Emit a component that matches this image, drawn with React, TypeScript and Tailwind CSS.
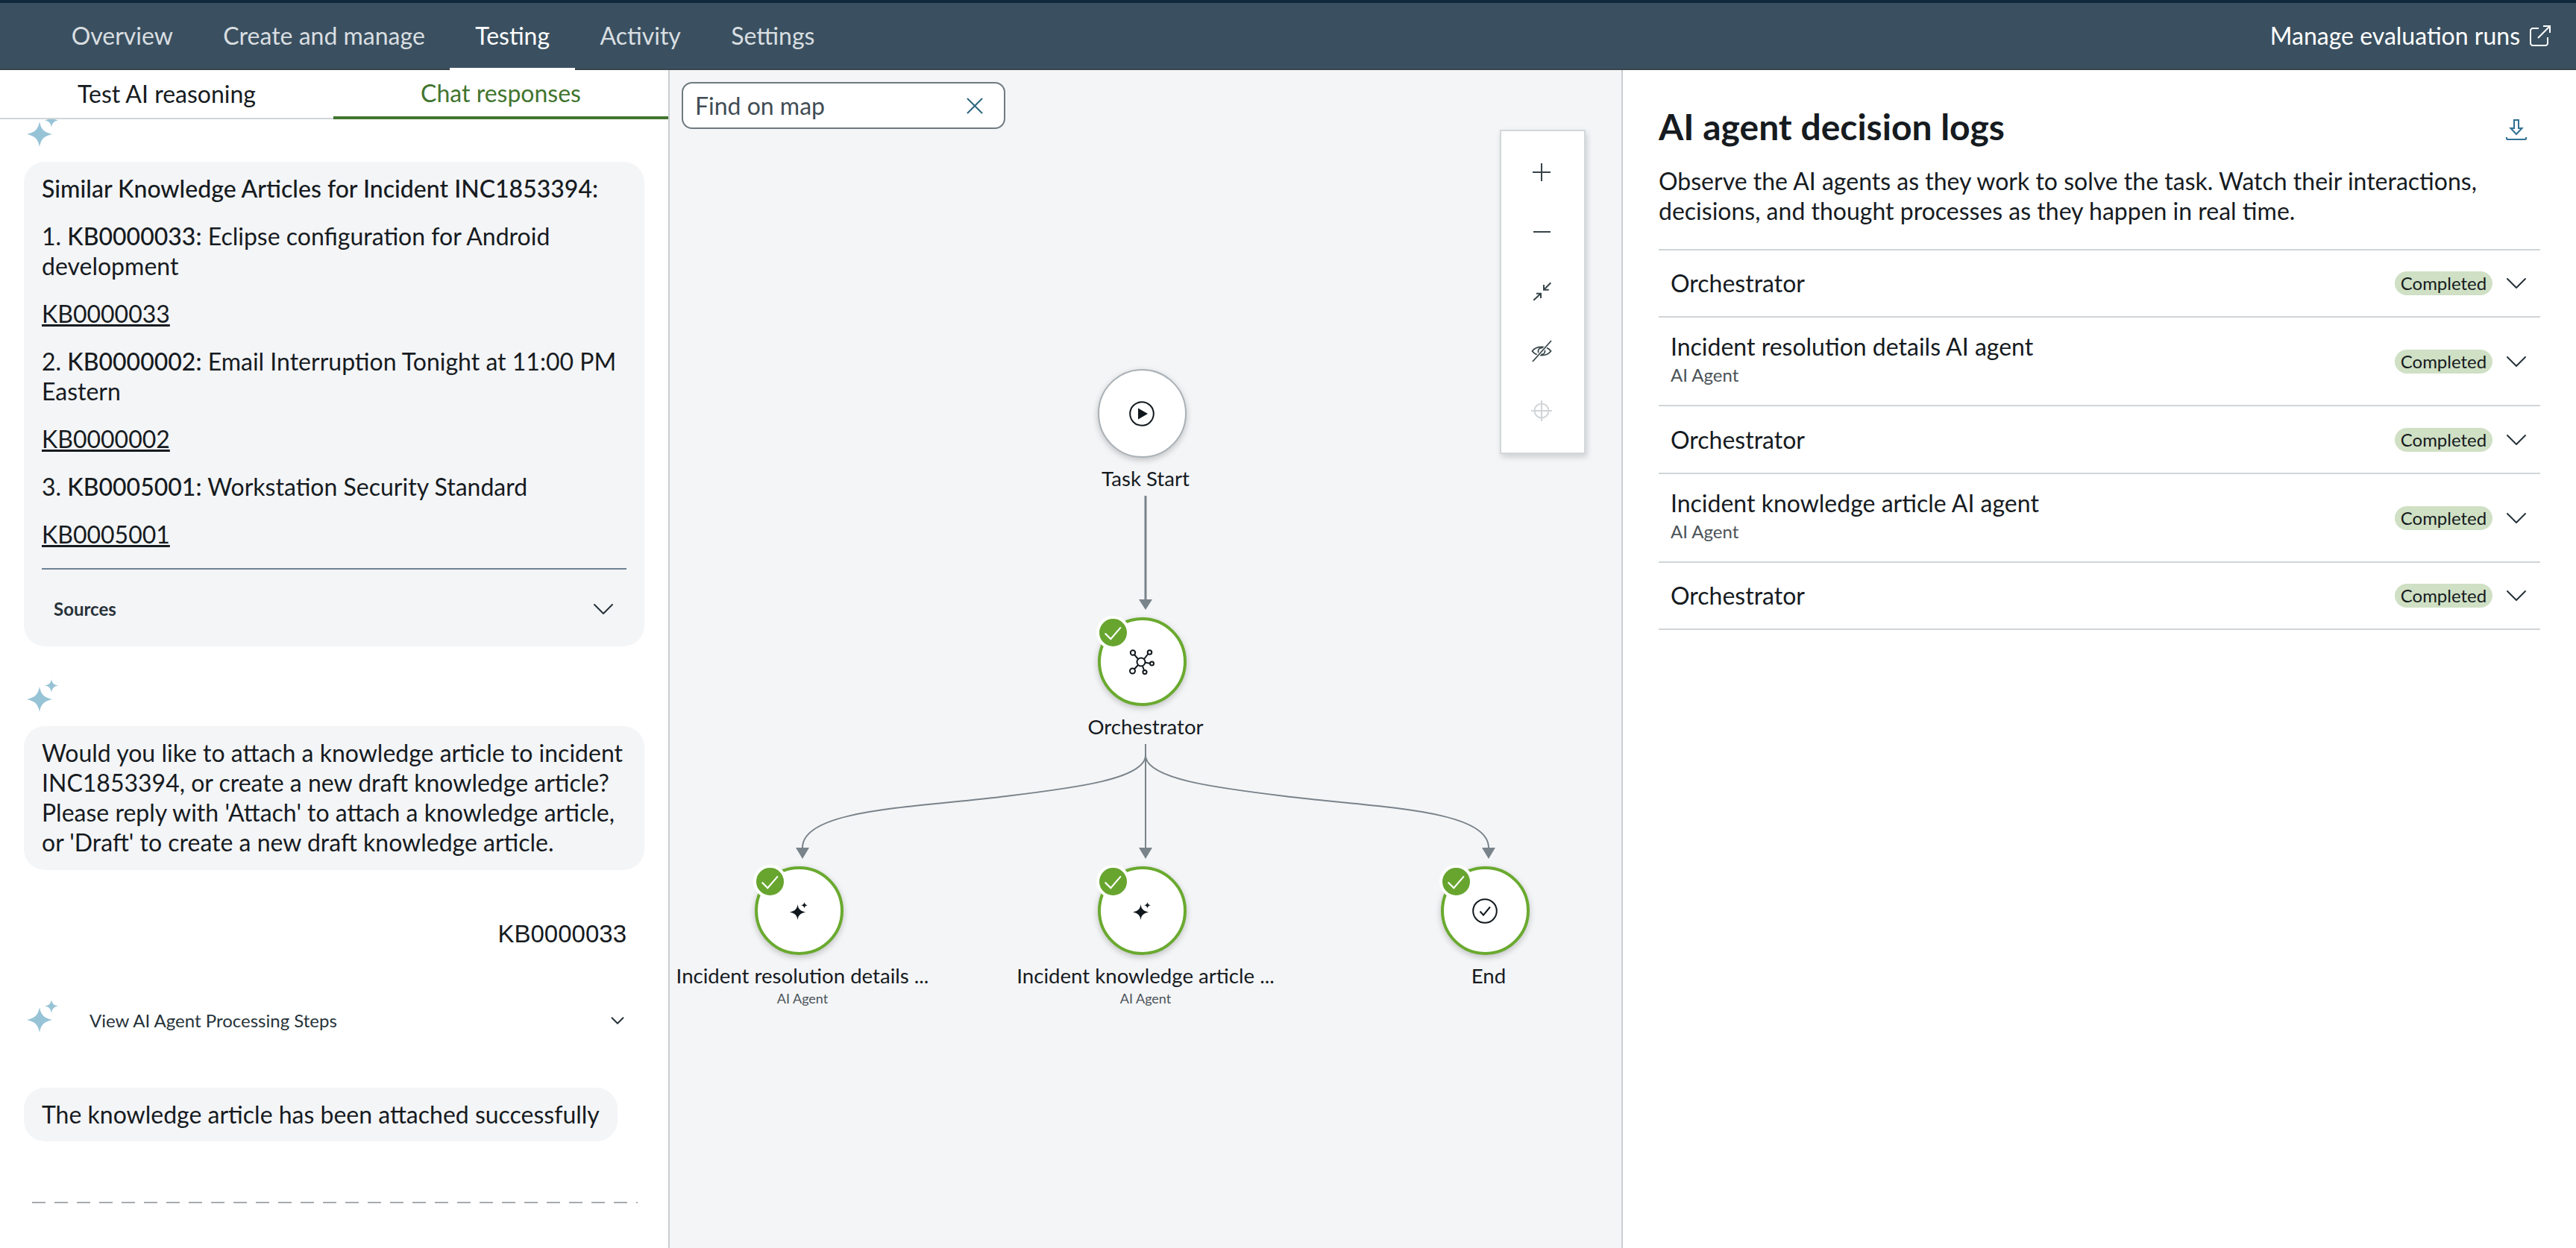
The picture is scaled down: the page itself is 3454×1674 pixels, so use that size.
import { ChevronDown, X } from "lucide-react";

const navItems = ["Overview", "Create and manage", "Testing", "Activity", "Settings"];

const logRows = [
  { title: "Orchestrator", h: "h-[90px]" },
  { title: "Incident resolution details AI agent", sub: "AI Agent", h: "h-[119px]" },
  { title: "Orchestrator", h: "h-[91px]" },
  { title: "Incident knowledge article AI agent", sub: "AI Agent", h: "h-[119px]" },
  { title: "Orchestrator", h: "h-[90px]" },
];

const Sparkle = ({ className = "" }: { className?: string }) => (
  <svg viewBox="0 0 42 44" className={`block h-[44px] w-[42px] shrink-0 ${className}`} fill="#97c3d6">
    <path d="M17 10C19 21 23.5 24.5 34 27C23.5 29.5 19 33 17 44C15 33 10.5 29.5 0 27C10.5 24.5 15 21 17 10Z" />
    <path d="M33 0C33.8 5 36 7.4 42 8.5C36 9.6 33.8 12 33 18C32.2 12 30 9.6 24 8.5C30 7.4 32.2 5 33 0Z" />
  </svg>
);

const DarkSparkle = () => (
  <svg viewBox="0 0 24 24" className="h-[24px] w-[24px]" fill="#11181d">
    <path d="M10.5 3C11.3 9 13.5 11.8 21 13.5C13.5 15.2 11.3 18 10.5 24C9.7 18 7.5 15.2 0 13.5C7.5 11.8 9.7 9 10.5 3Z" />
    <path d="M19.5 0C19.8 2.4 20.8 3.6 24 4.2C20.8 4.8 19.8 6 19.5 8.6C19.2 6 18.2 4.8 15 4.2C18.2 3.6 19.2 2.4 19.5 0Z" />
  </svg>
);

const PlayIcon = () => (
  <svg viewBox="0 0 34 34" className="h-[34px] w-[34px]">
    <circle cx="17" cy="17" r="15.8" fill="none" stroke="#11181d" strokeWidth="2" />
    <path d="M12 9.5L25 17L12 24.5Z" fill="#11181d" />
  </svg>
);

const NetworkIcon = () => (
  <svg viewBox="0 0 34 34" className="h-[34px] w-[34px]" fill="none" stroke="#11181d" strokeWidth="2">
    <circle cx="16" cy="17" r="5.5" />
    <circle cx="5" cy="4.5" r="3.2" />
    <circle cx="27.5" cy="4" r="2.8" />
    <circle cx="30.5" cy="19" r="2.5" />
    <circle cx="4.5" cy="29" r="3.5" />
    <circle cx="21" cy="30.5" r="2.6" />
    <path d="M7 7L12 13M25.5 6L20 13M21.5 17.8L28 18.8M12 21L7 26.5M18 22.5L20 28" />
  </svg>
);

const CheckCircleIcon = () => (
  <svg viewBox="0 0 34 34" className="h-[34px] w-[34px]" fill="none" stroke="#11181d" strokeWidth="2">
    <circle cx="17" cy="17" r="15.8" />
    <path d="M10.5 17.5L15 22.5L24 11.5" />
  </svg>
);

const nodes = [
  { label: "Task Start", icon: <PlayIcon />, done: false, wrap: "left-[458px] top-[401px]" },
  { label: "Orchestrator", icon: <NetworkIcon />, done: true, wrap: "left-[458px] top-[734px]" },
  { label: "Incident resolution details ...", sub: "AI Agent", icon: <DarkSparkle />, done: true, wrap: "left-[-2px] top-[1068px]" },
  { label: "Incident knowledge article ...", sub: "AI Agent", icon: <DarkSparkle />, done: true, wrap: "left-[458px] top-[1068px]" },
  { label: "End", icon: <CheckCircleIcon />, done: true, wrap: "left-[918px] top-[1068px]" },
];

const Node = ({ label, sub, icon, done, wrap }: { label: string; sub?: string; icon: React.ReactNode; done: boolean; wrap: string }) => (
  <div className={`absolute flex w-[360px] flex-col items-center ${wrap}`}>
    <div
      className={`relative mr-[10px] flex h-[119px] w-[119px] items-center justify-center rounded-full bg-white shadow-[0_3px_8px_rgba(0,0,0,0.22)] ${
        done ? "border-[4px] border-[#6aaa2f]" : "border-2 border-[#a9b1b6]"
      }`}
    >
      {icon}
      {done && (
        <div className="absolute left-[-6px] top-[-6px] flex h-[45px] w-[45px] items-center justify-center rounded-full border-[4px] border-white bg-[#67a52f]">
          <svg viewBox="0 0 24 24" className="h-[26px] w-[26px]" fill="none" stroke="#fff" strokeWidth="2">
            <path d="M2.5 12.5L9.5 19.5L22 5" />
          </svg>
        </div>
      )}
    </div>
    <div className="mt-[9px] whitespace-nowrap text-[27.6px] leading-[38px] text-[#161b1f]">{label}</div>
    {sub && <div className="text-[18px] leading-[22px] text-[#4b5359]">{sub}</div>}
  </div>
);

const Connectors = () => (
  <svg viewBox="0 0 1277 1580" className="absolute left-0 top-0 h-[1580px] w-[1277px]" fill="none" stroke="#79838a">
    <path d="M638 571V711" strokeWidth="3" />
    <path d="M629 710H647L638 724Z" fill="#79838a" stroke="none" />
    <path d="M638 904V1044" strokeWidth="2" />
    <path d="M629 1043H647L638 1058Z" fill="#79838a" stroke="none" />
    <path d="M638 919C638 951 542 963 451 974C332 989 178 991 178 1043" strokeWidth="2" />
    <path d="M169 1043H187L178 1058Z" fill="#79838a" stroke="none" />
    <path d="M638 919C638 951 734 963 825 974C944 989 1098 991 1098 1043" strokeWidth="2" />
    <path d="M1089 1043H1107L1098 1058Z" fill="#79838a" stroke="none" />
  </svg>
);

const MapControls = () => (
  <div className="absolute left-[1113px] top-[80px] flex h-[435px] w-[115px] flex-col items-center border-2 border-[#d2d8da] bg-white pr-[3px] pt-[15px] shadow-[2px_4px_8px_rgba(0,0,0,0.16)]">
    {[
      <path key="a" d="M13 1V25M1 13H25" />,
      <path key="b" d="M2 13H25" />,
      <path key="c" d="M25.3 1.3L16 10.7M16 4V10.7H22.7M2.3 24.7L12 15.7M6 15.7H12V22" />,
      <g key="d" strokeWidth="1.8">
        <path d="M0.5 13C6 5.5 20 5.5 25.5 13C20 20.5 6 20.5 0.5 13Z" />
        <circle cx="13" cy="13" r="4.5" />
        <path d="M1 27L26 -1" stroke="#fff" strokeWidth="4" />
        <path d="M1 27L26 -1" />
      </g>,
      <g key="e" stroke="#d2d5d7">
        <circle cx="13" cy="13" r="9.5" />
        <path d="M13 -1V27M-1 13H27" />
      </g>,
    ].map((icon, i) => (
      <div key={i} className="flex h-[80px] w-full items-center justify-center">
        <svg viewBox="0 0 26 26" className="h-[26px] w-[26px] overflow-visible" fill="none" stroke="#37454a" strokeWidth="2">
          {icon}
        </svg>
      </div>
    ))}
  </div>
);

const ChatPanel = () => (
  <div className="flex h-full w-[898px] shrink-0 flex-col border-r-2 border-[#c9ced1] bg-white text-[32px] leading-[40px] text-[#161b1f]">
    <div className="flex h-[66px] shrink-0">
      <div className="flex w-[447px] items-center justify-center border-b-2 border-[#d0d5d8]">Test AI reasoning</div>
      <div className="flex w-[449px] items-center justify-center border-b-4 border-[#42752f] text-[#42752f]">Chat responses</div>
    </div>
    <div className="min-h-0 flex-1 overflow-hidden">
      <div className="mt-[-7px] px-[32px]">
        <Sparkle className="ml-[4px]" />
        <div className="mt-[20px] rounded-[28px] bg-[#f4f5f7] px-[24px] pt-[16px]">
          <p className="mb-[24px] font-medium">Similar Knowledge Articles for Incident INC1853394:</p>
          <p className="mb-[24px]">1. <span className="font-medium">KB0000033:</span> Eclipse configuration for Android development</p>
          <p className="mb-[24px] underline">KB0000033</p>
          <p className="mb-[24px]">2. <span className="font-medium">KB0000002:</span> Email Interruption Tonight at 11:00 PM Eastern</p>
          <p className="mb-[24px] underline">KB0000002</p>
          <p className="mb-[24px]">3. <span className="font-medium">KB0005001:</span> Workstation Security Standard</p>
          <p className="mb-[25px] underline">KB0005001</p>
          <div className="flex h-[105px] items-center justify-between border-t-2 border-[#6d8295] pl-[16px] pr-[7px] pt-[3px]">
            <span className="text-[24px] font-bold leading-[30px] text-[#27333a]">Sources</span>
            <ChevronDown className="h-[48px] w-[48px] text-[#27333a]" strokeWidth={1} />
          </div>
        </div>
        <Sparkle className="ml-[4px] mt-[44px]" />
        <div className="mt-[19px] rounded-[28px] bg-[#f4f5f7] px-[24px] pb-[17px] pt-[16px]">
          Would you like to attach a knowledge article to incident INC1853394, or create a new draft knowledge article? Please reply with 'Attach' to attach a knowledge article, or 'Draft' to create a new draft knowledge article.
        </div>
        <div className="mt-[66px] pr-[24px] text-right text-[33px] [font-family:'Liberation_Sans',sans-serif]">KB0000033</div>
        <div className="mt-[68px] flex items-center">
          <Sparkle className="ml-[4px]" />
          <span className="ml-[42px] mt-[12px] flex-1 text-[24px] leading-[30px] text-[#27333a]">View AI Agent Processing Steps</span>
          <ChevronDown className="mr-[21px] mt-[12px] h-[30px] w-[30px] text-[#27333a]" strokeWidth={1.6} />
        </div>
        <div className="mt-[74px] w-fit rounded-[28px] bg-[#f4f5f7] px-[24px] py-[16px]">The knowledge article has been attached successfully</div>
        <div className="ml-[11px] mt-[81px] h-[2px] w-[812px] bg-[repeating-linear-gradient(to_right,#a7abae_0,#a7abae_18px,transparent_18px,transparent_30px)]" />
      </div>
    </div>
  </div>
);

const MapPanel = () => (
  <div className="relative h-full w-[1278px] shrink-0 overflow-hidden border-r-2 border-[#c9ced1] bg-[#f4f5f7] text-[#161b1f]">
    <div className="absolute left-[16px] top-[16px] flex h-[63px] w-[434px] items-center justify-between rounded-[14px] border-2 border-[#6f7a80] bg-white pl-[16px] pr-[20px] text-[32px] text-[#414d55]">
      <span>Find on map</span>
      <X className="h-[38px] w-[38px] text-[#2f6880]" strokeWidth={1.3} />
    </div>
    <Connectors />
    {nodes.map((n) => (
      <Node key={n.label} {...n} />
    ))}
    <MapControls />
  </div>
);

const LogsPanel = () => (
  <div className="h-full flex-1 bg-white pl-[48px] pr-[48px] text-[#161b1f]">
    <div className="flex items-center justify-between pt-[48px]">
      <h1 className="text-[48px] font-bold leading-[56px]">AI agent decision logs</h1>
      <svg viewBox="0 0 28 28" className="mr-[18px] mt-[8px] h-[28px] w-[28px]" fill="none" stroke="#2f7093" strokeWidth="2">
        <path d="M11 1H17V12H21.5L14 20L6.5 12H11Z" />
        <path d="M1 24V26C1 26.6 1.4 27 2 27H26C26.6 27 27 26.6 27 26V24" />
      </svg>
    </div>
    <p className="mt-[25px] text-[32px] leading-[40px]">Observe the AI agents as they work to solve the task. Watch their interactions, decisions, and thought processes as they happen in real time.</p>
    <div className="mt-[31px] border-t-2 border-[#d0d5d8]">
      {logRows.map((row, i) => (
        <div key={i} className={`flex items-center justify-between border-b-2 border-[#d0d5d8] pl-[16px] pr-[8px] ${row.h}`}>
          <div className={row.sub ? "pb-[8px]" : ""}>
            <div className="text-[32px] leading-[40px]">{row.title}</div>
            {row.sub && <div className="mt-[4px] text-[24px] leading-[28px] text-[#4b5359]">{row.sub}</div>}
          </div>
          <div className="flex items-center gap-[8px]">
            <span className="flex h-[32px] w-[131px] items-center justify-center rounded-full bg-[#cfe0c4] text-[24px] leading-[32px]">Completed</span>
            <ChevronDown className="h-[48px] w-[48px] text-[#27333a]" strokeWidth={1} />
          </div>
        </div>
      ))}
    </div>
  </div>
);

export default function App() {
  return (
    <div className="flex h-[1674px] w-[3454px] flex-col overflow-hidden bg-white [font-family:Lato,sans-serif]">
      <header className="flex h-[94px] shrink-0 items-stretch justify-between border-t-4 border-b-2 border-t-[#10293a] border-b-[#3a444b] bg-[#3a5060] pl-[62px] pr-[34px] text-[32px] text-[#d9dee1]">
        <nav className="flex">
          {navItems.map((item) => (
            <div key={item} className={`relative flex items-center px-[33.7px] ${item === "Testing" ? "text-white" : ""}`}>
              {item}
              {item === "Testing" && <div className="absolute bottom-[-2px] left-0 h-[3px] w-full bg-white" />}
            </div>
          ))}
        </nav>
        <div className="flex items-center gap-[13px] text-white">
          <span>Manage evaluation runs</span>
          <svg viewBox="0 0 28 28" className="h-[28px] w-[28px]" fill="none" stroke="#fff" strokeWidth="2">
            <path d="M12 4H4C2.5 4 1 5.5 1 7V24C1 25.5 2.5 27 4 27H21C22.5 27 24 25.5 24 24V16" />
            <path d="M11 17L27 1M18 1H27V10" />
          </svg>
        </div>
      </header>
      <div className="flex min-h-0 flex-1">
        <ChatPanel />
        <MapPanel />
        <LogsPanel />
      </div>
    </div>
  );
}
